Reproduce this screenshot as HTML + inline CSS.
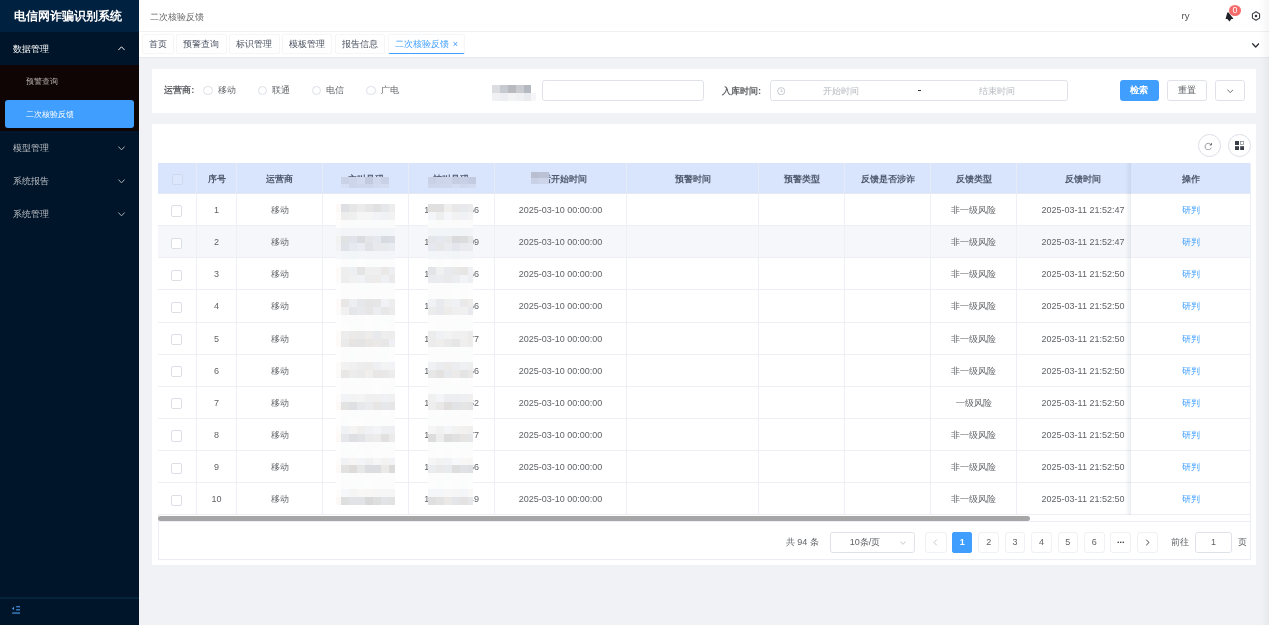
<!DOCTYPE html>
<html lang="zh"><head><meta charset="utf-8"><title>二次核验反馈</title>
<style>
*{box-sizing:border-box;margin:0;padding:0}
html,body{width:1269px;height:625px;overflow:hidden;background:#f0f2f5}
body{font-family:"Liberation Sans",sans-serif;font-size:9.33px;color:#606266;position:relative;will-change:transform}
.a{position:absolute;white-space:nowrap}
.c{position:absolute;white-space:nowrap;text-align:center;overflow:hidden}
#side{left:0;top:0;width:139px;height:625px;background:#001529}
#logo{left:0;top:0;width:139px;height:32px;background:#002140;color:#fff;font-weight:bold;font-size:11.9px;line-height:33px;text-align:center;padding-right:3.4px}
.mi{left:13.3px;font-size:9.33px;color:#b7bcc2;line-height:12px}
.sub{left:0;top:65px;width:139px;height:66px;background:#100505}
.act{left:5px;top:100px;width:129px;height:28px;border-radius:3px;background:#409eff}
.si{left:26px;font-size:8px;line-height:10px}
#hdr{left:139px;top:0;width:1130px;height:32px;background:#fff;border-bottom:1px solid #eef0f3}
#tabs{left:139px;top:32px;width:1130px;height:25px;background:#fff;box-shadow:0 0.7px 1.5px rgba(0,21,41,.10)}
.tab{top:34.4px;height:19.3px;line-height:18.6px;border:1px solid #f5f6f8;border-radius:2px;font-size:9.33px;color:#495060;text-align:center;overflow:hidden;background:#fff}
.panel{background:#fff}
.lbl{font-weight:bold;color:#606266;font-size:9.33px;line-height:12px}
.radio{width:9.33px;height:9.33px;border:1px solid #dcdfe6;border-radius:50%;background:#fff}
.inp{border:1px solid #dfe2e8;border-radius:2.67px;background:#fff}
.ph{color:#b4b8bf;font-size:9.33px;line-height:12px}
.btn{border:1px solid #dfe2e8;border-radius:2.67px;background:#fff;text-align:center;font-size:9.33px;line-height:19.3px;color:#606266;overflow:hidden}
.circ{width:22.7px;height:22.7px;border:1px solid #dcdfe6;border-radius:50%;background:#fff}
.th{background:#d8e5fc;top:163.3px;height:30.7px;line-height:32.6px;font-weight:bold;color:#515a6e;font-size:9.33px;border-right:1px solid #e6ebf5;border-bottom:1px solid #e3e8f2}
.td{font-size:9px;color:#606266;border-right:1px solid #eef0f5;border-bottom:1px solid #edeff4}
.cb{width:11.2px;height:11.2px;border:1px solid #dcdfe6;border-radius:2px;background:#fff}
.pg{top:531.8px;height:20.8px;line-height:19.6px;border:1px solid #f0f1f4;border-radius:3px;text-align:center;font-size:9px;color:#606266;background:#fff;overflow:hidden}
.mz{position:absolute;overflow:hidden}
</style></head>
<body>
<div id="side" class="a">
<div id="logo" class="a">电信网诈骗识别系统</div>
<div class="a mi" style="top:42.5px;color:#fff">数据管理</div>
<svg class="a" style="left:118.00px;top:45.98px" width="7" height="4.85" viewBox="0 0 7 4.85"><path d="M0.6 3.85 L3.50 0.8 L6.40 3.85" fill="none" stroke="#fff" stroke-width="0.95" stroke-linecap="round" stroke-linejoin="round"/></svg>
<div class="a sub"></div>
<div class="a si" style="top:77.0px;color:#b9b4b4">预警查询</div>
<div class="a act"></div>
<div class="a si" style="top:110.0px;color:#fff">二次核验反馈</div>
<div class="a mi" style="top:142px">模型管理</div>
<svg class="a" style="left:118.00px;top:145.67px" width="7" height="4.85" viewBox="0 0 7 4.85"><path d="M0.6 0.8 L3.50 3.85 L6.40 0.8" fill="none" stroke="#b7bcc2" stroke-width="0.95" stroke-linecap="round" stroke-linejoin="round"/></svg>
<div class="a mi" style="top:175px">系统报告</div>
<svg class="a" style="left:118.00px;top:178.67px" width="7" height="4.85" viewBox="0 0 7 4.85"><path d="M0.6 0.8 L3.50 3.85 L6.40 0.8" fill="none" stroke="#b7bcc2" stroke-width="0.95" stroke-linecap="round" stroke-linejoin="round"/></svg>
<div class="a mi" style="top:208px">系统管理</div>
<svg class="a" style="left:118.00px;top:211.67px" width="7" height="4.85" viewBox="0 0 7 4.85"><path d="M0.6 0.8 L3.50 3.85 L6.40 0.8" fill="none" stroke="#b7bcc2" stroke-width="0.95" stroke-linecap="round" stroke-linejoin="round"/></svg>
<div class="a" style="left:0;top:596.6px;width:139px;height:2px;background:linear-gradient(180deg,rgba(14,52,88,0),rgba(14,52,88,.9) 50%,rgba(14,52,88,0))"></div>
<svg class="a" style="left:11.8px;top:606.4px" width="8.4" height="8" viewBox="0 0 8.4 8"><path d="M0 2.4 L2 0.7 L2 4.1 Z" fill="#4a9cf0"/><rect x="4.2" y="0.2" width="4" height="1.1" fill="#4a9cf0"/><rect x="4.2" y="3.3" width="4" height="1.1" fill="#4a9cf0"/><rect x="0.1" y="6.5" width="8.1" height="1.1" fill="#4a9cf0"/></svg>
</div>
<div id="hdr" class="a"></div>
<div class="a" style="left:149.5px;top:10.5px;font-size:9.33px;line-height:12px;color:#666">二次核验反馈</div>
<div class="a" style="left:1181.6px;top:10.2px;font-size:9.6px;line-height:12px;color:#555">ry</div>
<svg class="a" style="left:1225px;top:11.5px" width="9" height="10" viewBox="0 0 9 10"><path d="M2.3 0.6 L3.6 0.5 L8.2 6.6 L8.2 7 L0.6 7 L0.7 6.4 Z" fill="#1f2329"/><path d="M2.4 7 L6.4 7 L4.4 9.6 Z" fill="#1f2329"/></svg>
<div class="a" style="left:1228.7px;top:5px;width:12.6px;height:10.8px;border-radius:50%;background:#f56c6c;color:#fff;font-size:8.7px;line-height:10.9px;text-align:center">0</div>
<svg class="a" style="left:1250.8px;top:10.7px" width="10" height="10" viewBox="0 0 10 10"><path d="M5 0.8 L8.6 2.9 L8.6 7.1 L5 9.2 L1.4 7.1 L1.4 2.9 Z" fill="none" stroke="#33373d" stroke-width="1.05" stroke-linejoin="round"/><circle cx="5" cy="5" r="1.25" fill="#33373d"/></svg>
<div id="tabs" class="a"></div>
<div class="a tab" style="left:141.6px;width:32.3px">首页</div>
<div class="a tab" style="left:176.3px;width:50.4px">预警查询</div>
<div class="a tab" style="left:229.2px;width:50.5px">标识管理</div>
<div class="a tab" style="left:281.9px;width:50.6px">模板管理</div>
<div class="a tab" style="left:335.0px;width:50.4px">报告信息</div>
<div class="a tab" style="left:387.8px;width:77px;color:#409eff;border-bottom:1.9px solid #409eff;text-align:left;padding-left:6.4px">二次核验反馈<span style="position:absolute;left:64px;top:0;font-size:9px">×</span></div>
<svg class="a" style="left:1252.00px;top:42.87px" width="7.4" height="5.07" viewBox="0 0 7.4 5.07"><path d="M0.6 0.8 L3.70 4.07 L6.80 0.8" fill="none" stroke="#2b2f36" stroke-width="1.3" stroke-linecap="round" stroke-linejoin="round"/></svg>
<div class="a panel" style="left:151.7px;top:69.3px;width:1104.3px;height:43.7px"></div>
<div class="a lbl" style="left:164.3px;top:84.4px">运营商:</div>
<div class="a radio" style="left:203.33px;top:85.93px"></div>
<div class="a" style="left:217.70px;top:84.4px;line-height:12px">移动</div>
<div class="a radio" style="left:257.63px;top:85.93px"></div>
<div class="a" style="left:272.00px;top:84.4px;line-height:12px">联通</div>
<div class="a radio" style="left:311.93px;top:85.93px"></div>
<div class="a" style="left:326.30px;top:84.4px;line-height:12px">电信</div>
<div class="a radio" style="left:366.23px;top:85.93px"></div>
<div class="a" style="left:380.60px;top:84.4px;line-height:12px">广电</div>
<div class="mz" style="left:492px;top:84.5px;width:44px;height:16px"><div class="a" style="left:0;top:0;width:39px;height:8px;background:linear-gradient(90deg,#dcdde1 0 8px,#c6c9cf 8px 16px,#b9babf 16px 24px,#c9cbd0 24px 32px,#b4b8c0 32px 39px)"></div><div class="a" style="left:0;top:8px;width:44px;height:8px;background:linear-gradient(90deg,#f1f1f4 0 8px,#eceef1 8px 16px,#f3f3f3 16px 24px,#eef0f2 24px 32px,#e9ebee 32px 39px,#f6f6f8 39px 44px)"></div></div>
<div class="a inp" style="left:542.4px;top:80.2px;width:161.3px;height:20.7px"></div>
<div class="a lbl" style="left:722px;top:84.6px">入库时间:</div>
<div class="a inp" style="left:770.1px;top:80.2px;width:297.5px;height:20.7px"></div>
<svg class="a" style="left:777px;top:86.6px" width="8.4" height="8.4" viewBox="0 0 8.4 8.4"><circle cx="4.2" cy="4.2" r="3.6" fill="none" stroke="#b9bdc6" stroke-width="0.8"/><path d="M4.2 2.2 V4.4 H5.9" fill="none" stroke="#b9bdc6" stroke-width="0.8"/></svg>
<div class="c ph" style="left:811.4px;top:84.6px;width:60px">开始时间</div>
<div class="a" style="left:918.2px;top:90.2px;width:2.6px;height:1.3px;background:#303133"></div>
<div class="c ph" style="left:966.7px;top:84.6px;width:60px">结束时间</div>
<div class="a btn" style="left:1119.7px;top:79.9px;width:39.3px;height:21.1px;background:#409eff;border-color:#409eff;color:#fff;font-weight:bold">检索</div>
<div class="a btn" style="left:1167.3px;top:79.9px;width:39.6px;height:21.1px">重置</div>
<div class="a btn" style="left:1215px;top:79.9px;width:29.9px;height:21.1px"></div>
<svg class="a" style="left:1226.70px;top:88.58px" width="6.6" height="4.63" viewBox="0 0 6.6 4.63"><path d="M0.6 0.8 L3.30 3.63 L6.00 0.8" fill="none" stroke="#606266" stroke-width="0.9" stroke-linecap="round" stroke-linejoin="round"/></svg>
<div class="a panel" style="left:151.7px;top:123.8px;width:1104.3px;height:441.4px"></div>
<div class="a circ" style="left:1198.1px;top:134px"></div>
<svg class="a" style="left:1204.1px;top:141.7px" width="8.6" height="8.6" viewBox="0 0 9 9"><path d="M7.3 2.9 A3.4 3.4 0 1 0 7.7 5.9" fill="none" stroke="#80838a" stroke-width="0.85"/><path d="M7.9 1.2 V3.1 H6" fill="none" stroke="#4d5057" stroke-width="0.9"/></svg>
<div class="a circ" style="left:1228.1px;top:134px"></div>
<svg class="a" style="left:1234.5px;top:141.2px" width="9.2" height="9.2" viewBox="0 0 9.2 9.2"><rect x="0" y="0" width="4" height="4" fill="#3a3f47"/><rect x="5.4" y="0.4" width="3.2" height="3.2" fill="#fff" stroke="#8a8f98" stroke-width="0.8"/><rect x="0" y="5.2" width="4" height="4" fill="#3a3f47"/><rect x="5.2" y="5.2" width="4" height="4" fill="#3a3f47"/></svg>
<div class="a" style="left:158px;top:163.3px;width:1092.5px;height:396.6px;border:1px solid #ebeef5"></div>
<div class="c th" style="left:158px;width:39.0px"></div>
<div class="c th" style="left:197.0px;width:40.0px">序号</div>
<div class="c th" style="left:237.0px;width:86.2px">运营商</div>
<div class="c th" style="left:323.2px;width:85.9px">主叫号码</div>
<div class="c th" style="left:409.1px;width:85.8px">被叫号码</div>
<div class="c th" style="left:494.9px;width:132.2px">通话开始时间</div>
<div class="c th" style="left:627.1px;width:132.0px">预警时间</div>
<div class="c th" style="left:759.1px;width:86.0px">预警类型</div>
<div class="c th" style="left:845.1px;width:86.1px">反馈是否涉诈</div>
<div class="c th" style="left:931.2px;width:85.7px">反馈类型</div>
<div class="c th" style="left:1016.9px;width:133.3px">反馈时间</div>
<div class="a cb" style="left:171.67px;top:173.60px;border-color:#cfd9ee;background:#dde7fb"></div>
<div class="mz" style="left:340.9px;top:176.6px;width:48.10px;height:11px"><div class="a" style="left:0;top:0;width:100%;height:8px;background:linear-gradient(90deg,rgb(201,210,231) 0.00px 7.90px,rgb(204,213,234) 7.90px 16.10px,rgb(209,218,239) 16.10px 23.80px,rgb(193,202,223) 23.80px 32.20px,rgb(207,216,237) 32.20px 39.70px,rgb(200,209,230) 39.70px 48.10px)"></div><div class="a" style="left:0;top:7.9px;width:100%;height:3.1px;background:linear-gradient(90deg,rgb(214,223,244) 0.00px 7.90px,rgb(204,213,234) 7.90px 16.10px,rgb(206,215,236) 16.10px 23.80px,rgb(205,214,235) 23.80px 32.20px,rgb(209,218,239) 32.20px 39.70px,rgb(211,220,241) 39.70px 48.10px)"></div></div>
<div class="mz" style="left:428.3px;top:176.6px;width:47.90px;height:11px"><div class="a" style="left:0;top:0;width:100%;height:8px;background:linear-gradient(90deg,rgb(200,209,230) 0.00px 8.00px,rgb(204,213,234) 8.00px 15.90px,rgb(205,214,235) 15.90px 23.90px,rgb(197,206,227) 23.90px 31.90px,rgb(199,208,229) 31.90px 39.90px,rgb(194,203,224) 39.90px 47.90px)"></div><div class="a" style="left:0;top:7.9px;width:100%;height:3.1px;background:linear-gradient(90deg,rgb(205,214,235) 0.00px 8.00px,rgb(206,215,236) 8.00px 15.90px,rgb(207,216,237) 15.90px 23.90px,rgb(212,221,242) 23.90px 31.90px,rgb(207,216,237) 31.90px 39.90px,rgb(210,219,240) 39.90px 47.90px)"></div></div>
<div class="mz" style="left:531.4px;top:172.1px;width:17.2px;height:11.8px;background:linear-gradient(180deg,rgba(0,0,0,0) 0 5.9px,rgba(0,0,0,0) 5.9px),linear-gradient(90deg,#b9bed0 0 8px,#bcc2d5 8px 17.2px)"><div class="a" style="left:0;top:5.9px;width:100%;height:5.9px;background:linear-gradient(90deg,#c9d1e6 0 8px,#cdd5ea 8px 17.2px)"></div></div>
<div class="c td" style="left:158px;top:194.00px;width:39.0px;height:32.15px;line-height:33.85px;background:#fff"></div>
<div class="c td" style="left:197.0px;top:194.00px;width:40.0px;height:32.15px;line-height:33.85px;background:#fff">1</div>
<div class="c td" style="left:237.0px;top:194.00px;width:86.2px;height:32.15px;line-height:33.85px;background:#fff">移动</div>
<div class="c td" style="left:323.2px;top:194.00px;width:85.9px;height:32.15px;line-height:33.85px;background:#fff"></div>
<div class="c td" style="left:409.1px;top:194.00px;width:85.8px;height:32.15px;line-height:33.85px;background:#fff"></div>
<div class="c td" style="left:494.9px;top:194.00px;width:132.2px;height:32.15px;line-height:33.85px;background:#fff">2025-03-10 00:00:00</div>
<div class="c td" style="left:627.1px;top:194.00px;width:132.0px;height:32.15px;line-height:33.85px;background:#fff"></div>
<div class="c td" style="left:759.1px;top:194.00px;width:86.0px;height:32.15px;line-height:33.85px;background:#fff"></div>
<div class="c td" style="left:845.1px;top:194.00px;width:86.1px;height:32.15px;line-height:33.85px;background:#fff"></div>
<div class="c td" style="left:931.2px;top:194.00px;width:85.7px;height:32.15px;line-height:33.85px;background:#fff">非一级风险</div>
<div class="c td" style="left:1016.9px;top:194.00px;width:133.3px;height:32.15px;line-height:33.85px;background:#fff">2025-03-11 21:52:47</div>
<div class="a cb" style="left:171.30px;top:205.40px"></div>
<div class="a" style="left:424.3px;top:194.00px;line-height:33.85px;font-size:9px">1</div>
<div class="a" style="left:468.9px;top:194.00px;line-height:33.85px;font-size:9px">66</div>
<div class="c td" style="left:158px;top:226.15px;width:39.0px;height:32.15px;line-height:33.85px;background:#f5f7fa"></div>
<div class="c td" style="left:197.0px;top:226.15px;width:40.0px;height:32.15px;line-height:33.85px;background:#f5f7fa">2</div>
<div class="c td" style="left:237.0px;top:226.15px;width:86.2px;height:32.15px;line-height:33.85px;background:#f5f7fa">移动</div>
<div class="c td" style="left:323.2px;top:226.15px;width:85.9px;height:32.15px;line-height:33.85px;background:#f5f7fa"></div>
<div class="c td" style="left:409.1px;top:226.15px;width:85.8px;height:32.15px;line-height:33.85px;background:#f5f7fa"></div>
<div class="c td" style="left:494.9px;top:226.15px;width:132.2px;height:32.15px;line-height:33.85px;background:#f5f7fa">2025-03-10 00:00:00</div>
<div class="c td" style="left:627.1px;top:226.15px;width:132.0px;height:32.15px;line-height:33.85px;background:#f5f7fa"></div>
<div class="c td" style="left:759.1px;top:226.15px;width:86.0px;height:32.15px;line-height:33.85px;background:#f5f7fa"></div>
<div class="c td" style="left:845.1px;top:226.15px;width:86.1px;height:32.15px;line-height:33.85px;background:#f5f7fa"></div>
<div class="c td" style="left:931.2px;top:226.15px;width:85.7px;height:32.15px;line-height:33.85px;background:#f5f7fa">非一级风险</div>
<div class="c td" style="left:1016.9px;top:226.15px;width:133.3px;height:32.15px;line-height:33.85px;background:#f5f7fa">2025-03-11 21:52:47</div>
<div class="a cb" style="left:171.30px;top:237.55px"></div>
<div class="a" style="left:424.3px;top:226.15px;line-height:33.85px;font-size:9px">1</div>
<div class="a" style="left:468.9px;top:226.15px;line-height:33.85px;font-size:9px">09</div>
<div class="c td" style="left:158px;top:258.30px;width:39.0px;height:32.15px;line-height:33.85px;background:#fff"></div>
<div class="c td" style="left:197.0px;top:258.30px;width:40.0px;height:32.15px;line-height:33.85px;background:#fff">3</div>
<div class="c td" style="left:237.0px;top:258.30px;width:86.2px;height:32.15px;line-height:33.85px;background:#fff">移动</div>
<div class="c td" style="left:323.2px;top:258.30px;width:85.9px;height:32.15px;line-height:33.85px;background:#fff"></div>
<div class="c td" style="left:409.1px;top:258.30px;width:85.8px;height:32.15px;line-height:33.85px;background:#fff"></div>
<div class="c td" style="left:494.9px;top:258.30px;width:132.2px;height:32.15px;line-height:33.85px;background:#fff">2025-03-10 00:00:00</div>
<div class="c td" style="left:627.1px;top:258.30px;width:132.0px;height:32.15px;line-height:33.85px;background:#fff"></div>
<div class="c td" style="left:759.1px;top:258.30px;width:86.0px;height:32.15px;line-height:33.85px;background:#fff"></div>
<div class="c td" style="left:845.1px;top:258.30px;width:86.1px;height:32.15px;line-height:33.85px;background:#fff"></div>
<div class="c td" style="left:931.2px;top:258.30px;width:85.7px;height:32.15px;line-height:33.85px;background:#fff">非一级风险</div>
<div class="c td" style="left:1016.9px;top:258.30px;width:133.3px;height:32.15px;line-height:33.85px;background:#fff">2025-03-11 21:52:50</div>
<div class="a cb" style="left:171.30px;top:269.70px"></div>
<div class="a" style="left:424.3px;top:258.30px;line-height:33.85px;font-size:9px">1</div>
<div class="a" style="left:468.9px;top:258.30px;line-height:33.85px;font-size:9px">66</div>
<div class="c td" style="left:158px;top:290.45px;width:39.0px;height:32.15px;line-height:33.85px;background:#fff"></div>
<div class="c td" style="left:197.0px;top:290.45px;width:40.0px;height:32.15px;line-height:33.85px;background:#fff">4</div>
<div class="c td" style="left:237.0px;top:290.45px;width:86.2px;height:32.15px;line-height:33.85px;background:#fff">移动</div>
<div class="c td" style="left:323.2px;top:290.45px;width:85.9px;height:32.15px;line-height:33.85px;background:#fff"></div>
<div class="c td" style="left:409.1px;top:290.45px;width:85.8px;height:32.15px;line-height:33.85px;background:#fff"></div>
<div class="c td" style="left:494.9px;top:290.45px;width:132.2px;height:32.15px;line-height:33.85px;background:#fff">2025-03-10 00:00:00</div>
<div class="c td" style="left:627.1px;top:290.45px;width:132.0px;height:32.15px;line-height:33.85px;background:#fff"></div>
<div class="c td" style="left:759.1px;top:290.45px;width:86.0px;height:32.15px;line-height:33.85px;background:#fff"></div>
<div class="c td" style="left:845.1px;top:290.45px;width:86.1px;height:32.15px;line-height:33.85px;background:#fff"></div>
<div class="c td" style="left:931.2px;top:290.45px;width:85.7px;height:32.15px;line-height:33.85px;background:#fff">非一级风险</div>
<div class="c td" style="left:1016.9px;top:290.45px;width:133.3px;height:32.15px;line-height:33.85px;background:#fff">2025-03-11 21:52:50</div>
<div class="a cb" style="left:171.30px;top:301.85px"></div>
<div class="a" style="left:424.3px;top:290.45px;line-height:33.85px;font-size:9px">1</div>
<div class="a" style="left:468.9px;top:290.45px;line-height:33.85px;font-size:9px">66</div>
<div class="c td" style="left:158px;top:322.60px;width:39.0px;height:32.15px;line-height:33.85px;background:#fff"></div>
<div class="c td" style="left:197.0px;top:322.60px;width:40.0px;height:32.15px;line-height:33.85px;background:#fff">5</div>
<div class="c td" style="left:237.0px;top:322.60px;width:86.2px;height:32.15px;line-height:33.85px;background:#fff">移动</div>
<div class="c td" style="left:323.2px;top:322.60px;width:85.9px;height:32.15px;line-height:33.85px;background:#fff"></div>
<div class="c td" style="left:409.1px;top:322.60px;width:85.8px;height:32.15px;line-height:33.85px;background:#fff"></div>
<div class="c td" style="left:494.9px;top:322.60px;width:132.2px;height:32.15px;line-height:33.85px;background:#fff">2025-03-10 00:00:00</div>
<div class="c td" style="left:627.1px;top:322.60px;width:132.0px;height:32.15px;line-height:33.85px;background:#fff"></div>
<div class="c td" style="left:759.1px;top:322.60px;width:86.0px;height:32.15px;line-height:33.85px;background:#fff"></div>
<div class="c td" style="left:845.1px;top:322.60px;width:86.1px;height:32.15px;line-height:33.85px;background:#fff"></div>
<div class="c td" style="left:931.2px;top:322.60px;width:85.7px;height:32.15px;line-height:33.85px;background:#fff">非一级风险</div>
<div class="c td" style="left:1016.9px;top:322.60px;width:133.3px;height:32.15px;line-height:33.85px;background:#fff">2025-03-11 21:52:50</div>
<div class="a cb" style="left:171.30px;top:334.00px"></div>
<div class="a" style="left:424.3px;top:322.60px;line-height:33.85px;font-size:9px">1</div>
<div class="a" style="left:468.9px;top:322.60px;line-height:33.85px;font-size:9px">77</div>
<div class="c td" style="left:158px;top:354.75px;width:39.0px;height:32.15px;line-height:33.85px;background:#fff"></div>
<div class="c td" style="left:197.0px;top:354.75px;width:40.0px;height:32.15px;line-height:33.85px;background:#fff">6</div>
<div class="c td" style="left:237.0px;top:354.75px;width:86.2px;height:32.15px;line-height:33.85px;background:#fff">移动</div>
<div class="c td" style="left:323.2px;top:354.75px;width:85.9px;height:32.15px;line-height:33.85px;background:#fff"></div>
<div class="c td" style="left:409.1px;top:354.75px;width:85.8px;height:32.15px;line-height:33.85px;background:#fff"></div>
<div class="c td" style="left:494.9px;top:354.75px;width:132.2px;height:32.15px;line-height:33.85px;background:#fff">2025-03-10 00:00:00</div>
<div class="c td" style="left:627.1px;top:354.75px;width:132.0px;height:32.15px;line-height:33.85px;background:#fff"></div>
<div class="c td" style="left:759.1px;top:354.75px;width:86.0px;height:32.15px;line-height:33.85px;background:#fff"></div>
<div class="c td" style="left:845.1px;top:354.75px;width:86.1px;height:32.15px;line-height:33.85px;background:#fff"></div>
<div class="c td" style="left:931.2px;top:354.75px;width:85.7px;height:32.15px;line-height:33.85px;background:#fff">非一级风险</div>
<div class="c td" style="left:1016.9px;top:354.75px;width:133.3px;height:32.15px;line-height:33.85px;background:#fff">2025-03-11 21:52:50</div>
<div class="a cb" style="left:171.30px;top:366.15px"></div>
<div class="a" style="left:424.3px;top:354.75px;line-height:33.85px;font-size:9px">1</div>
<div class="a" style="left:468.9px;top:354.75px;line-height:33.85px;font-size:9px">66</div>
<div class="c td" style="left:158px;top:386.90px;width:39.0px;height:32.15px;line-height:33.85px;background:#fff"></div>
<div class="c td" style="left:197.0px;top:386.90px;width:40.0px;height:32.15px;line-height:33.85px;background:#fff">7</div>
<div class="c td" style="left:237.0px;top:386.90px;width:86.2px;height:32.15px;line-height:33.85px;background:#fff">移动</div>
<div class="c td" style="left:323.2px;top:386.90px;width:85.9px;height:32.15px;line-height:33.85px;background:#fff"></div>
<div class="c td" style="left:409.1px;top:386.90px;width:85.8px;height:32.15px;line-height:33.85px;background:#fff"></div>
<div class="c td" style="left:494.9px;top:386.90px;width:132.2px;height:32.15px;line-height:33.85px;background:#fff">2025-03-10 00:00:00</div>
<div class="c td" style="left:627.1px;top:386.90px;width:132.0px;height:32.15px;line-height:33.85px;background:#fff"></div>
<div class="c td" style="left:759.1px;top:386.90px;width:86.0px;height:32.15px;line-height:33.85px;background:#fff"></div>
<div class="c td" style="left:845.1px;top:386.90px;width:86.1px;height:32.15px;line-height:33.85px;background:#fff"></div>
<div class="c td" style="left:931.2px;top:386.90px;width:85.7px;height:32.15px;line-height:33.85px;background:#fff">一级风险</div>
<div class="c td" style="left:1016.9px;top:386.90px;width:133.3px;height:32.15px;line-height:33.85px;background:#fff">2025-03-11 21:52:50</div>
<div class="a cb" style="left:171.30px;top:398.30px"></div>
<div class="a" style="left:424.3px;top:386.90px;line-height:33.85px;font-size:9px">1</div>
<div class="a" style="left:468.9px;top:386.90px;line-height:33.85px;font-size:9px">52</div>
<div class="c td" style="left:158px;top:419.05px;width:39.0px;height:32.15px;line-height:33.85px;background:#fff"></div>
<div class="c td" style="left:197.0px;top:419.05px;width:40.0px;height:32.15px;line-height:33.85px;background:#fff">8</div>
<div class="c td" style="left:237.0px;top:419.05px;width:86.2px;height:32.15px;line-height:33.85px;background:#fff">移动</div>
<div class="c td" style="left:323.2px;top:419.05px;width:85.9px;height:32.15px;line-height:33.85px;background:#fff"></div>
<div class="c td" style="left:409.1px;top:419.05px;width:85.8px;height:32.15px;line-height:33.85px;background:#fff"></div>
<div class="c td" style="left:494.9px;top:419.05px;width:132.2px;height:32.15px;line-height:33.85px;background:#fff">2025-03-10 00:00:00</div>
<div class="c td" style="left:627.1px;top:419.05px;width:132.0px;height:32.15px;line-height:33.85px;background:#fff"></div>
<div class="c td" style="left:759.1px;top:419.05px;width:86.0px;height:32.15px;line-height:33.85px;background:#fff"></div>
<div class="c td" style="left:845.1px;top:419.05px;width:86.1px;height:32.15px;line-height:33.85px;background:#fff"></div>
<div class="c td" style="left:931.2px;top:419.05px;width:85.7px;height:32.15px;line-height:33.85px;background:#fff">非一级风险</div>
<div class="c td" style="left:1016.9px;top:419.05px;width:133.3px;height:32.15px;line-height:33.85px;background:#fff">2025-03-11 21:52:50</div>
<div class="a cb" style="left:171.30px;top:430.45px"></div>
<div class="a" style="left:424.3px;top:419.05px;line-height:33.85px;font-size:9px">1</div>
<div class="a" style="left:468.9px;top:419.05px;line-height:33.85px;font-size:9px">77</div>
<div class="c td" style="left:158px;top:451.20px;width:39.0px;height:32.15px;line-height:33.85px;background:#fff"></div>
<div class="c td" style="left:197.0px;top:451.20px;width:40.0px;height:32.15px;line-height:33.85px;background:#fff">9</div>
<div class="c td" style="left:237.0px;top:451.20px;width:86.2px;height:32.15px;line-height:33.85px;background:#fff">移动</div>
<div class="c td" style="left:323.2px;top:451.20px;width:85.9px;height:32.15px;line-height:33.85px;background:#fff"></div>
<div class="c td" style="left:409.1px;top:451.20px;width:85.8px;height:32.15px;line-height:33.85px;background:#fff"></div>
<div class="c td" style="left:494.9px;top:451.20px;width:132.2px;height:32.15px;line-height:33.85px;background:#fff">2025-03-10 00:00:00</div>
<div class="c td" style="left:627.1px;top:451.20px;width:132.0px;height:32.15px;line-height:33.85px;background:#fff"></div>
<div class="c td" style="left:759.1px;top:451.20px;width:86.0px;height:32.15px;line-height:33.85px;background:#fff"></div>
<div class="c td" style="left:845.1px;top:451.20px;width:86.1px;height:32.15px;line-height:33.85px;background:#fff"></div>
<div class="c td" style="left:931.2px;top:451.20px;width:85.7px;height:32.15px;line-height:33.85px;background:#fff">非一级风险</div>
<div class="c td" style="left:1016.9px;top:451.20px;width:133.3px;height:32.15px;line-height:33.85px;background:#fff">2025-03-11 21:52:50</div>
<div class="a cb" style="left:171.30px;top:462.60px"></div>
<div class="a" style="left:424.3px;top:451.20px;line-height:33.85px;font-size:9px">1</div>
<div class="a" style="left:468.9px;top:451.20px;line-height:33.85px;font-size:9px">66</div>
<div class="c td" style="left:158px;top:483.35px;width:39.0px;height:32.15px;line-height:33.85px;background:#fff"></div>
<div class="c td" style="left:197.0px;top:483.35px;width:40.0px;height:32.15px;line-height:33.85px;background:#fff">10</div>
<div class="c td" style="left:237.0px;top:483.35px;width:86.2px;height:32.15px;line-height:33.85px;background:#fff">移动</div>
<div class="c td" style="left:323.2px;top:483.35px;width:85.9px;height:32.15px;line-height:33.85px;background:#fff"></div>
<div class="c td" style="left:409.1px;top:483.35px;width:85.8px;height:32.15px;line-height:33.85px;background:#fff"></div>
<div class="c td" style="left:494.9px;top:483.35px;width:132.2px;height:32.15px;line-height:33.85px;background:#fff">2025-03-10 00:00:00</div>
<div class="c td" style="left:627.1px;top:483.35px;width:132.0px;height:32.15px;line-height:33.85px;background:#fff"></div>
<div class="c td" style="left:759.1px;top:483.35px;width:86.0px;height:32.15px;line-height:33.85px;background:#fff"></div>
<div class="c td" style="left:845.1px;top:483.35px;width:86.1px;height:32.15px;line-height:33.85px;background:#fff"></div>
<div class="c td" style="left:931.2px;top:483.35px;width:85.7px;height:32.15px;line-height:33.85px;background:#fff">非一级风险</div>
<div class="c td" style="left:1016.9px;top:483.35px;width:133.3px;height:32.15px;line-height:33.85px;background:#fff">2025-03-11 21:52:50</div>
<div class="a cb" style="left:171.30px;top:494.75px"></div>
<div class="a" style="left:424.3px;top:483.35px;line-height:33.85px;font-size:9px">1</div>
<div class="a" style="left:468.9px;top:483.35px;line-height:33.85px;font-size:9px">49</div>
<div class="mz" style="left:336.1px;top:203.8px;width:58.50px;height:301.34px"><div class="a" style="left:0;top:0.00px;width:100%;height:8.23px;background:linear-gradient(90deg,rgb(252,249,247) 0.00px 4.70px,rgb(223,224,227) 4.70px 12.90px,rgb(230,230,230) 12.90px 20.80px,rgb(235,235,235) 20.80px 29.00px,rgb(230,230,230) 29.00px 36.80px,rgb(225,225,226) 36.80px 44.80px,rgb(230,231,234) 44.80px 52.80px,rgb(237,237,238) 52.80px 58.50px)"></div><div class="a" style="left:0;top:7.93px;width:100%;height:8.23px;background:linear-gradient(90deg,rgb(253,252,250) 0.00px 4.70px,rgb(237,237,237) 4.70px 12.90px,rgb(239,239,239) 12.90px 20.80px,rgb(245,245,245) 20.80px 29.00px,rgb(245,245,246) 29.00px 36.80px,rgb(242,243,246) 36.80px 44.80px,rgb(240,241,244) 44.80px 52.80px,rgb(242,242,242) 52.80px 58.50px)"></div><div class="a" style="left:0;top:15.86px;width:100%;height:8.23px;background:linear-gradient(90deg,rgb(253,253,253) 0.00px 4.70px,rgb(251,251,251) 4.70px 12.90px,rgb(250,251,251) 12.90px 20.80px,rgb(251,251,251) 20.80px 29.00px,rgb(250,251,251) 29.00px 36.80px,rgb(250,251,251) 36.80px 44.80px,rgb(251,251,251) 44.80px 52.80px,rgb(250,251,251) 52.80px 58.50px)"></div><div class="a" style="left:0;top:23.79px;width:100%;height:8.23px;background:linear-gradient(90deg,rgb(244,246,248) 0.00px 4.70px,rgb(242,244,247) 4.70px 12.90px,rgb(243,244,247) 12.90px 20.80px,rgb(242,244,247) 20.80px 29.00px,rgb(242,244,247) 29.00px 36.80px,rgb(242,244,247) 36.80px 44.80px,rgb(242,245,247) 44.80px 52.80px,rgb(242,244,247) 52.80px 58.50px)"></div><div class="a" style="left:0;top:31.72px;width:100%;height:8.23px;background:linear-gradient(90deg,rgb(242,242,242) 0.00px 4.70px,rgb(225,226,227) 4.70px 12.90px,rgb(224,227,233) 12.90px 20.80px,rgb(217,219,223) 20.80px 29.00px,rgb(227,229,233) 29.00px 36.80px,rgb(229,232,238) 36.80px 44.80px,rgb(216,219,225) 44.80px 52.80px,rgb(218,221,227) 52.80px 58.50px)"></div><div class="a" style="left:0;top:39.65px;width:100%;height:8.23px;background:linear-gradient(90deg,rgb(243,243,245) 0.00px 4.70px,rgb(223,226,232) 4.70px 12.90px,rgb(230,233,239) 12.90px 20.80px,rgb(233,236,242) 20.80px 29.00px,rgb(224,226,230) 29.00px 36.80px,rgb(231,233,236) 36.80px 44.80px,rgb(231,233,237) 44.80px 52.80px,rgb(232,235,241) 52.80px 58.50px)"></div><div class="a" style="left:0;top:47.58px;width:100%;height:8.23px;background:linear-gradient(90deg,rgb(246,247,249) 0.00px 4.70px,rgb(243,245,248) 4.70px 12.90px,rgb(242,245,248) 12.90px 20.80px,rgb(244,245,248) 20.80px 29.00px,rgb(243,245,248) 29.00px 36.80px,rgb(244,245,248) 36.80px 44.80px,rgb(243,245,248) 44.80px 52.80px,rgb(243,245,248) 52.80px 58.50px)"></div><div class="a" style="left:0;top:55.51px;width:100%;height:8.23px;background:linear-gradient(90deg,rgb(254,254,254) 0.00px 4.70px,rgb(253,252,252) 4.70px 12.90px,rgb(251,252,252) 12.90px 20.80px,rgb(252,253,252) 20.80px 29.00px,rgb(251,252,252) 29.00px 36.80px,rgb(251,252,252) 36.80px 44.80px,rgb(253,252,252) 44.80px 52.80px,rgb(252,252,252) 52.80px 58.50px)"></div><div class="a" style="left:0;top:63.44px;width:100%;height:8.23px;background:linear-gradient(90deg,rgb(253,250,248) 0.00px 4.70px,rgb(238,238,238) 4.70px 12.90px,rgb(238,239,242) 12.90px 20.80px,rgb(228,228,228) 20.80px 29.00px,rgb(239,239,240) 29.00px 36.80px,rgb(239,239,240) 36.80px 44.80px,rgb(234,233,231) 44.80px 52.80px,rgb(237,238,241) 52.80px 58.50px)"></div><div class="a" style="left:0;top:71.37px;width:100%;height:8.23px;background:linear-gradient(90deg,rgb(253,251,249) 0.00px 4.70px,rgb(237,237,237) 4.70px 12.90px,rgb(241,241,242) 12.90px 20.80px,rgb(241,242,245) 20.80px 29.00px,rgb(236,236,236) 29.00px 36.80px,rgb(237,236,234) 36.80px 44.80px,rgb(239,240,243) 44.80px 52.80px,rgb(234,234,235) 52.80px 58.50px)"></div><div class="a" style="left:0;top:79.30px;width:100%;height:8.23px;background:linear-gradient(90deg,rgb(254,254,254) 0.00px 4.70px,rgb(252,252,252) 4.70px 12.90px,rgb(253,252,252) 12.90px 20.80px,rgb(251,252,252) 20.80px 29.00px,rgb(251,252,252) 29.00px 36.80px,rgb(253,252,252) 36.80px 44.80px,rgb(252,252,252) 44.80px 52.80px,rgb(251,252,252) 52.80px 58.50px)"></div><div class="a" style="left:0;top:87.23px;width:100%;height:8.23px;background:linear-gradient(90deg,rgb(254,254,254) 0.00px 4.70px,rgb(253,252,252) 4.70px 12.90px,rgb(252,252,252) 12.90px 20.80px,rgb(252,252,252) 20.80px 29.00px,rgb(253,252,252) 29.00px 36.80px,rgb(252,252,252) 36.80px 44.80px,rgb(252,252,252) 44.80px 52.80px,rgb(252,252,252) 52.80px 58.50px)"></div><div class="a" style="left:0;top:95.16px;width:100%;height:8.23px;background:linear-gradient(90deg,rgb(253,250,249) 0.00px 4.70px,rgb(232,231,229) 4.70px 12.90px,rgb(237,238,241) 12.90px 20.80px,rgb(230,231,234) 20.80px 29.00px,rgb(229,229,230) 29.00px 36.80px,rgb(230,230,230) 36.80px 44.80px,rgb(241,242,245) 44.80px 52.80px,rgb(237,237,238) 52.80px 58.50px)"></div><div class="a" style="left:0;top:103.09px;width:100%;height:8.23px;background:linear-gradient(90deg,rgb(253,251,249) 0.00px 4.70px,rgb(241,241,242) 4.70px 12.90px,rgb(229,230,233) 12.90px 20.80px,rgb(232,233,236) 20.80px 29.00px,rgb(230,230,230) 29.00px 36.80px,rgb(236,237,240) 36.80px 44.80px,rgb(231,231,232) 44.80px 52.80px,rgb(235,235,235) 52.80px 58.50px)"></div><div class="a" style="left:0;top:111.02px;width:100%;height:8.23px;background:linear-gradient(90deg,rgb(254,254,254) 0.00px 4.70px,rgb(252,252,252) 4.70px 12.90px,rgb(252,252,252) 12.90px 20.80px,rgb(252,252,252) 20.80px 29.00px,rgb(252,253,252) 29.00px 36.80px,rgb(252,252,252) 36.80px 44.80px,rgb(251,252,252) 44.80px 52.80px,rgb(251,252,252) 52.80px 58.50px)"></div><div class="a" style="left:0;top:118.95px;width:100%;height:8.23px;background:linear-gradient(90deg,rgb(254,254,254) 0.00px 4.70px,rgb(252,253,252) 4.70px 12.90px,rgb(251,252,252) 12.90px 20.80px,rgb(253,252,252) 20.80px 29.00px,rgb(252,253,252) 29.00px 36.80px,rgb(251,252,252) 36.80px 44.80px,rgb(252,253,252) 44.80px 52.80px,rgb(253,252,252) 52.80px 58.50px)"></div><div class="a" style="left:0;top:126.88px;width:100%;height:8.23px;background:linear-gradient(90deg,rgb(253,251,249) 0.00px 4.70px,rgb(237,237,238) 4.70px 12.90px,rgb(235,234,232) 12.90px 20.80px,rgb(233,233,234) 20.80px 29.00px,rgb(238,237,235) 29.00px 36.80px,rgb(232,233,236) 36.80px 44.80px,rgb(238,238,238) 44.80px 52.80px,rgb(238,237,235) 52.80px 58.50px)"></div><div class="a" style="left:0;top:134.81px;width:100%;height:8.23px;background:linear-gradient(90deg,rgb(253,250,248) 0.00px 4.70px,rgb(234,234,235) 4.70px 12.90px,rgb(230,229,227) 12.90px 20.80px,rgb(228,228,229) 20.80px 29.00px,rgb(232,231,229) 29.00px 36.80px,rgb(234,233,231) 36.80px 44.80px,rgb(231,231,231) 44.80px 52.80px,rgb(239,240,243) 52.80px 58.50px)"></div><div class="a" style="left:0;top:142.74px;width:100%;height:8.23px;background:linear-gradient(90deg,rgb(254,254,254) 0.00px 4.70px,rgb(253,252,252) 4.70px 12.90px,rgb(251,252,252) 12.90px 20.80px,rgb(252,252,252) 20.80px 29.00px,rgb(252,252,252) 29.00px 36.80px,rgb(253,252,252) 36.80px 44.80px,rgb(251,252,252) 44.80px 52.80px,rgb(252,253,252) 52.80px 58.50px)"></div><div class="a" style="left:0;top:150.67px;width:100%;height:8.23px;background:linear-gradient(90deg,rgb(254,254,254) 0.00px 4.70px,rgb(252,252,252) 4.70px 12.90px,rgb(251,252,252) 12.90px 20.80px,rgb(253,252,252) 20.80px 29.00px,rgb(252,252,252) 29.00px 36.80px,rgb(251,252,252) 36.80px 44.80px,rgb(251,252,252) 44.80px 52.80px,rgb(252,253,252) 52.80px 58.50px)"></div><div class="a" style="left:0;top:158.60px;width:100%;height:8.23px;background:linear-gradient(90deg,rgb(253,251,250) 0.00px 4.70px,rgb(242,242,243) 4.70px 12.90px,rgb(240,240,240) 12.90px 20.80px,rgb(237,237,237) 20.80px 29.00px,rgb(237,236,234) 29.00px 36.80px,rgb(238,239,242) 36.80px 44.80px,rgb(243,243,244) 44.80px 52.80px,rgb(242,243,246) 52.80px 58.50px)"></div><div class="a" style="left:0;top:166.53px;width:100%;height:8.23px;background:linear-gradient(90deg,rgb(252,250,248) 0.00px 4.70px,rgb(232,231,229) 4.70px 12.90px,rgb(236,236,237) 12.90px 20.80px,rgb(234,234,235) 20.80px 29.00px,rgb(240,239,237) 29.00px 36.80px,rgb(232,231,229) 36.80px 44.80px,rgb(232,232,233) 44.80px 52.80px,rgb(236,236,237) 52.80px 58.50px)"></div><div class="a" style="left:0;top:174.46px;width:100%;height:8.23px;background:linear-gradient(90deg,rgb(254,254,254) 0.00px 4.70px,rgb(253,252,252) 4.70px 12.90px,rgb(251,252,252) 12.90px 20.80px,rgb(252,252,252) 20.80px 29.00px,rgb(252,252,252) 29.00px 36.80px,rgb(252,253,252) 36.80px 44.80px,rgb(252,253,252) 44.80px 52.80px,rgb(252,252,252) 52.80px 58.50px)"></div><div class="a" style="left:0;top:182.39px;width:100%;height:8.23px;background:linear-gradient(90deg,rgb(254,254,254) 0.00px 4.70px,rgb(253,252,252) 4.70px 12.90px,rgb(252,252,252) 12.90px 20.80px,rgb(252,252,252) 20.80px 29.00px,rgb(252,252,252) 29.00px 36.80px,rgb(252,253,252) 36.80px 44.80px,rgb(252,252,252) 44.80px 52.80px,rgb(251,252,252) 52.80px 58.50px)"></div><div class="a" style="left:0;top:190.32px;width:100%;height:8.23px;background:linear-gradient(90deg,rgb(253,252,250) 0.00px 4.70px,rgb(242,243,246) 4.70px 12.90px,rgb(243,243,243) 12.90px 20.80px,rgb(244,244,245) 20.80px 29.00px,rgb(240,240,241) 29.00px 36.80px,rgb(240,240,241) 36.80px 44.80px,rgb(240,241,244) 44.80px 52.80px,rgb(240,240,240) 52.80px 58.50px)"></div><div class="a" style="left:0;top:198.25px;width:100%;height:8.23px;background:linear-gradient(90deg,rgb(252,249,247) 0.00px 4.70px,rgb(227,227,228) 4.70px 12.90px,rgb(223,224,227) 12.90px 20.80px,rgb(231,232,235) 20.80px 29.00px,rgb(234,235,238) 29.00px 36.80px,rgb(231,230,228) 36.80px 44.80px,rgb(231,232,235) 44.80px 52.80px,rgb(230,230,231) 52.80px 58.50px)"></div><div class="a" style="left:0;top:206.18px;width:100%;height:8.23px;background:linear-gradient(90deg,rgb(254,254,254) 0.00px 4.70px,rgb(253,252,252) 4.70px 12.90px,rgb(252,252,252) 12.90px 20.80px,rgb(251,252,252) 20.80px 29.00px,rgb(253,252,252) 29.00px 36.80px,rgb(253,252,252) 36.80px 44.80px,rgb(252,253,252) 44.80px 52.80px,rgb(252,252,252) 52.80px 58.50px)"></div><div class="a" style="left:0;top:214.11px;width:100%;height:8.23px;background:linear-gradient(90deg,rgb(254,254,254) 0.00px 4.70px,rgb(251,252,252) 4.70px 12.90px,rgb(252,253,252) 12.90px 20.80px,rgb(252,253,252) 20.80px 29.00px,rgb(252,252,252) 29.00px 36.80px,rgb(251,252,252) 36.80px 44.80px,rgb(252,252,252) 44.80px 52.80px,rgb(252,252,252) 52.80px 58.50px)"></div><div class="a" style="left:0;top:222.04px;width:100%;height:8.23px;background:linear-gradient(90deg,rgb(253,252,251) 0.00px 4.70px,rgb(240,241,244) 4.70px 12.90px,rgb(245,244,242) 12.90px 20.80px,rgb(240,239,237) 20.80px 29.00px,rgb(240,241,244) 29.00px 36.80px,rgb(243,244,247) 36.80px 44.80px,rgb(238,239,242) 44.80px 52.80px,rgb(238,239,242) 52.80px 58.50px)"></div><div class="a" style="left:0;top:229.97px;width:100%;height:8.23px;background:linear-gradient(90deg,rgb(252,249,246) 0.00px 4.70px,rgb(230,231,234) 4.70px 12.90px,rgb(222,223,226) 12.90px 20.80px,rgb(226,227,230) 20.80px 29.00px,rgb(234,234,235) 29.00px 36.80px,rgb(236,236,236) 36.80px 44.80px,rgb(226,225,223) 44.80px 52.80px,rgb(235,235,235) 52.80px 58.50px)"></div><div class="a" style="left:0;top:237.90px;width:100%;height:8.23px;background:linear-gradient(90deg,rgb(254,254,254) 0.00px 4.70px,rgb(251,252,252) 4.70px 12.90px,rgb(252,253,252) 12.90px 20.80px,rgb(252,252,252) 20.80px 29.00px,rgb(252,252,252) 29.00px 36.80px,rgb(252,252,252) 36.80px 44.80px,rgb(251,252,252) 44.80px 52.80px,rgb(251,252,252) 52.80px 58.50px)"></div><div class="a" style="left:0;top:245.83px;width:100%;height:8.23px;background:linear-gradient(90deg,rgb(254,254,254) 0.00px 4.70px,rgb(252,252,252) 4.70px 12.90px,rgb(251,252,252) 12.90px 20.80px,rgb(252,253,252) 20.80px 29.00px,rgb(252,252,252) 29.00px 36.80px,rgb(252,253,252) 36.80px 44.80px,rgb(253,252,252) 44.80px 52.80px,rgb(252,252,252) 52.80px 58.50px)"></div><div class="a" style="left:0;top:253.76px;width:100%;height:8.23px;background:linear-gradient(90deg,rgb(254,252,251) 0.00px 4.70px,rgb(241,242,245) 4.70px 12.90px,rgb(246,245,243) 12.90px 20.80px,rgb(243,244,247) 20.80px 29.00px,rgb(241,241,241) 29.00px 36.80px,rgb(246,246,246) 36.80px 44.80px,rgb(243,242,240) 44.80px 52.80px,rgb(242,243,246) 52.80px 58.50px)"></div><div class="a" style="left:0;top:261.69px;width:100%;height:8.23px;background:linear-gradient(90deg,rgb(252,249,246) 0.00px 4.70px,rgb(227,226,224) 4.70px 12.90px,rgb(221,220,218) 12.90px 20.80px,rgb(231,231,232) 20.80px 29.00px,rgb(220,221,224) 29.00px 36.80px,rgb(220,221,224) 36.80px 44.80px,rgb(235,234,232) 44.80px 52.80px,rgb(220,219,217) 52.80px 58.50px)"></div><div class="a" style="left:0;top:269.62px;width:100%;height:8.23px;background:linear-gradient(90deg,rgb(254,254,254) 0.00px 4.70px,rgb(251,252,252) 4.70px 12.90px,rgb(253,252,252) 12.90px 20.80px,rgb(252,252,252) 20.80px 29.00px,rgb(253,252,252) 29.00px 36.80px,rgb(252,252,252) 36.80px 44.80px,rgb(253,252,252) 44.80px 52.80px,rgb(253,252,252) 52.80px 58.50px)"></div><div class="a" style="left:0;top:277.55px;width:100%;height:8.23px;background:linear-gradient(90deg,rgb(254,254,254) 0.00px 4.70px,rgb(252,252,252) 4.70px 12.90px,rgb(252,252,252) 12.90px 20.80px,rgb(251,252,252) 20.80px 29.00px,rgb(252,253,252) 29.00px 36.80px,rgb(252,252,252) 36.80px 44.80px,rgb(252,252,252) 44.80px 52.80px,rgb(253,252,252) 52.80px 58.50px)"></div><div class="a" style="left:0;top:285.48px;width:100%;height:8.23px;background:linear-gradient(90deg,rgb(254,253,252) 0.00px 4.70px,rgb(247,248,251) 4.70px 12.90px,rgb(245,245,246) 12.90px 20.80px,rgb(249,248,246) 20.80px 29.00px,rgb(248,247,245) 29.00px 36.80px,rgb(246,246,246) 36.80px 44.80px,rgb(246,246,246) 44.80px 52.80px,rgb(246,246,247) 52.80px 58.50px)"></div><div class="a" style="left:0;top:293.41px;width:100%;height:8.23px;background:linear-gradient(90deg,rgb(252,248,245) 0.00px 4.70px,rgb(223,223,224) 4.70px 12.90px,rgb(226,227,230) 12.90px 20.80px,rgb(226,227,230) 20.80px 29.00px,rgb(217,217,217) 29.00px 36.80px,rgb(222,222,223) 36.80px 44.80px,rgb(226,227,230) 44.80px 52.80px,rgb(226,226,226) 52.80px 58.50px)"></div></div>
<div class="mz" style="left:428.2px;top:203.8px;width:44.40px;height:301.34px"><div class="a" style="left:0;top:0.00px;width:100%;height:8.23px;background:linear-gradient(90deg,rgb(225,224,222) 0.00px 7.80px,rgb(224,224,225) 7.80px 16.00px,rgb(240,239,237) 16.00px 23.90px,rgb(232,232,232) 23.90px 31.80px,rgb(232,233,236) 31.80px 39.90px,rgb(235,235,236) 39.90px 44.40px)"></div><div class="a" style="left:0;top:7.93px;width:100%;height:8.23px;background:linear-gradient(90deg,rgb(244,245,248) 0.00px 7.80px,rgb(238,238,239) 7.80px 16.00px,rgb(245,246,249) 16.00px 23.90px,rgb(242,242,242) 23.90px 31.80px,rgb(240,241,244) 31.80px 39.90px,rgb(243,243,244) 39.90px 44.40px)"></div><div class="a" style="left:0;top:15.86px;width:100%;height:8.23px;background:linear-gradient(90deg,rgb(250,251,251) 0.00px 7.80px,rgb(249,251,251) 7.80px 16.00px,rgb(251,251,251) 16.00px 23.90px,rgb(251,251,251) 23.90px 31.80px,rgb(251,251,251) 31.80px 39.90px,rgb(251,251,251) 39.90px 44.40px)"></div><div class="a" style="left:0;top:23.79px;width:100%;height:8.23px;background:linear-gradient(90deg,rgb(242,245,247) 0.00px 7.80px,rgb(242,245,247) 7.80px 16.00px,rgb(242,245,247) 16.00px 23.90px,rgb(241,244,247) 23.90px 31.80px,rgb(241,244,247) 31.80px 39.90px,rgb(242,244,247) 39.90px 44.40px)"></div><div class="a" style="left:0;top:31.72px;width:100%;height:8.23px;background:linear-gradient(90deg,rgb(227,229,233) 0.00px 7.80px,rgb(229,232,238) 7.80px 16.00px,rgb(230,231,232) 16.00px 23.90px,rgb(217,218,219) 23.90px 31.80px,rgb(219,220,221) 31.80px 39.90px,rgb(229,230,231) 39.90px 44.40px)"></div><div class="a" style="left:0;top:39.65px;width:100%;height:8.23px;background:linear-gradient(90deg,rgb(229,232,238) 0.00px 7.80px,rgb(230,231,232) 7.80px 16.00px,rgb(233,235,238) 16.00px 23.90px,rgb(227,230,236) 23.90px 31.80px,rgb(232,234,237) 31.80px 39.90px,rgb(233,235,238) 39.90px 44.40px)"></div><div class="a" style="left:0;top:47.58px;width:100%;height:8.23px;background:linear-gradient(90deg,rgb(243,246,248) 0.00px 7.80px,rgb(243,245,248) 7.80px 16.00px,rgb(243,246,248) 16.00px 23.90px,rgb(242,245,248) 23.90px 31.80px,rgb(243,245,248) 31.80px 39.90px,rgb(243,245,248) 39.90px 44.40px)"></div><div class="a" style="left:0;top:55.51px;width:100%;height:8.23px;background:linear-gradient(90deg,rgb(252,253,252) 0.00px 7.80px,rgb(253,252,252) 7.80px 16.00px,rgb(252,253,252) 16.00px 23.90px,rgb(252,252,252) 23.90px 31.80px,rgb(252,253,252) 31.80px 39.90px,rgb(252,253,252) 39.90px 44.40px)"></div><div class="a" style="left:0;top:63.44px;width:100%;height:8.23px;background:linear-gradient(90deg,rgb(227,228,231) 0.00px 7.80px,rgb(240,240,240) 7.80px 16.00px,rgb(233,234,237) 16.00px 23.90px,rgb(232,232,232) 23.90px 31.80px,rgb(231,230,228) 31.80px 39.90px,rgb(239,240,243) 39.90px 44.40px)"></div><div class="a" style="left:0;top:71.37px;width:100%;height:8.23px;background:linear-gradient(90deg,rgb(234,235,238) 0.00px 7.80px,rgb(235,236,239) 7.80px 16.00px,rgb(234,234,234) 16.00px 23.90px,rgb(236,237,240) 23.90px 31.80px,rgb(242,243,246) 31.80px 39.90px,rgb(237,238,241) 39.90px 44.40px)"></div><div class="a" style="left:0;top:79.30px;width:100%;height:8.23px;background:linear-gradient(90deg,rgb(252,252,252) 0.00px 7.80px,rgb(252,252,252) 7.80px 16.00px,rgb(252,252,252) 16.00px 23.90px,rgb(251,252,252) 23.90px 31.80px,rgb(252,252,252) 31.80px 39.90px,rgb(252,253,252) 39.90px 44.40px)"></div><div class="a" style="left:0;top:87.23px;width:100%;height:8.23px;background:linear-gradient(90deg,rgb(252,252,252) 0.00px 7.80px,rgb(252,252,252) 7.80px 16.00px,rgb(252,252,252) 16.00px 23.90px,rgb(252,253,252) 23.90px 31.80px,rgb(253,252,252) 31.80px 39.90px,rgb(252,253,252) 39.90px 44.40px)"></div><div class="a" style="left:0;top:95.16px;width:100%;height:8.23px;background:linear-gradient(90deg,rgb(241,242,245) 0.00px 7.80px,rgb(233,234,237) 7.80px 16.00px,rgb(240,240,241) 16.00px 23.90px,rgb(240,241,244) 23.90px 31.80px,rgb(233,233,234) 31.80px 39.90px,rgb(238,237,235) 39.90px 44.40px)"></div><div class="a" style="left:0;top:103.09px;width:100%;height:8.23px;background:linear-gradient(90deg,rgb(236,236,236) 0.00px 7.80px,rgb(232,233,236) 7.80px 16.00px,rgb(237,236,234) 16.00px 23.90px,rgb(239,239,240) 23.90px 31.80px,rgb(240,240,241) 31.80px 39.90px,rgb(232,233,236) 39.90px 44.40px)"></div><div class="a" style="left:0;top:111.02px;width:100%;height:8.23px;background:linear-gradient(90deg,rgb(252,252,252) 0.00px 7.80px,rgb(252,252,252) 7.80px 16.00px,rgb(253,252,252) 16.00px 23.90px,rgb(253,252,252) 23.90px 31.80px,rgb(253,252,252) 31.80px 39.90px,rgb(252,252,252) 39.90px 44.40px)"></div><div class="a" style="left:0;top:118.95px;width:100%;height:8.23px;background:linear-gradient(90deg,rgb(252,253,252) 0.00px 7.80px,rgb(253,252,252) 7.80px 16.00px,rgb(252,252,252) 16.00px 23.90px,rgb(253,252,252) 23.90px 31.80px,rgb(251,252,252) 31.80px 39.90px,rgb(252,252,252) 39.90px 44.40px)"></div><div class="a" style="left:0;top:126.88px;width:100%;height:8.23px;background:linear-gradient(90deg,rgb(236,236,237) 0.00px 7.80px,rgb(240,241,244) 7.80px 16.00px,rgb(243,243,244) 16.00px 23.90px,rgb(240,240,241) 23.90px 31.80px,rgb(240,240,240) 31.80px 39.90px,rgb(236,236,237) 39.90px 44.40px)"></div><div class="a" style="left:0;top:134.81px;width:100%;height:8.23px;background:linear-gradient(90deg,rgb(236,236,237) 0.00px 7.80px,rgb(239,238,236) 7.80px 16.00px,rgb(234,234,234) 16.00px 23.90px,rgb(230,230,231) 23.90px 31.80px,rgb(239,239,239) 31.80px 39.90px,rgb(237,236,234) 39.90px 44.40px)"></div><div class="a" style="left:0;top:142.74px;width:100%;height:8.23px;background:linear-gradient(90deg,rgb(252,252,252) 0.00px 7.80px,rgb(252,252,252) 7.80px 16.00px,rgb(252,252,252) 16.00px 23.90px,rgb(251,252,252) 23.90px 31.80px,rgb(251,252,252) 31.80px 39.90px,rgb(251,252,252) 39.90px 44.40px)"></div><div class="a" style="left:0;top:150.67px;width:100%;height:8.23px;background:linear-gradient(90deg,rgb(253,252,252) 0.00px 7.80px,rgb(253,252,252) 7.80px 16.00px,rgb(252,252,252) 16.00px 23.90px,rgb(252,252,252) 23.90px 31.80px,rgb(252,252,252) 31.80px 39.90px,rgb(251,252,252) 39.90px 44.40px)"></div><div class="a" style="left:0;top:158.60px;width:100%;height:8.23px;background:linear-gradient(90deg,rgb(240,241,244) 0.00px 7.80px,rgb(235,236,239) 7.80px 16.00px,rgb(236,235,233) 16.00px 23.90px,rgb(236,237,240) 23.90px 31.80px,rgb(239,240,243) 31.80px 39.90px,rgb(238,238,238) 39.90px 44.40px)"></div><div class="a" style="left:0;top:166.53px;width:100%;height:8.23px;background:linear-gradient(90deg,rgb(231,231,231) 0.00px 7.80px,rgb(227,226,224) 7.80px 16.00px,rgb(232,233,236) 16.00px 23.90px,rgb(236,235,233) 23.90px 31.80px,rgb(228,228,229) 31.80px 39.90px,rgb(234,233,231) 39.90px 44.40px)"></div><div class="a" style="left:0;top:174.46px;width:100%;height:8.23px;background:linear-gradient(90deg,rgb(252,252,252) 0.00px 7.80px,rgb(253,252,252) 7.80px 16.00px,rgb(252,252,252) 16.00px 23.90px,rgb(252,253,252) 23.90px 31.80px,rgb(251,252,252) 31.80px 39.90px,rgb(252,253,252) 39.90px 44.40px)"></div><div class="a" style="left:0;top:182.39px;width:100%;height:8.23px;background:linear-gradient(90deg,rgb(253,252,252) 0.00px 7.80px,rgb(253,252,252) 7.80px 16.00px,rgb(251,252,252) 16.00px 23.90px,rgb(253,252,252) 23.90px 31.80px,rgb(252,252,252) 31.80px 39.90px,rgb(252,252,252) 39.90px 44.40px)"></div><div class="a" style="left:0;top:190.32px;width:100%;height:8.23px;background:linear-gradient(90deg,rgb(240,240,240) 0.00px 7.80px,rgb(244,245,248) 7.80px 16.00px,rgb(237,238,241) 16.00px 23.90px,rgb(237,238,241) 23.90px 31.80px,rgb(238,239,242) 31.80px 39.90px,rgb(241,240,238) 39.90px 44.40px)"></div><div class="a" style="left:0;top:198.25px;width:100%;height:8.23px;background:linear-gradient(90deg,rgb(238,238,239) 0.00px 7.80px,rgb(233,232,230) 7.80px 16.00px,rgb(224,223,221) 16.00px 23.90px,rgb(226,227,230) 23.90px 31.80px,rgb(229,229,230) 31.80px 39.90px,rgb(227,227,227) 39.90px 44.40px)"></div><div class="a" style="left:0;top:206.18px;width:100%;height:8.23px;background:linear-gradient(90deg,rgb(252,252,252) 0.00px 7.80px,rgb(252,253,252) 7.80px 16.00px,rgb(251,252,252) 16.00px 23.90px,rgb(253,252,252) 23.90px 31.80px,rgb(252,252,252) 31.80px 39.90px,rgb(252,252,252) 39.90px 44.40px)"></div><div class="a" style="left:0;top:214.11px;width:100%;height:8.23px;background:linear-gradient(90deg,rgb(251,252,252) 0.00px 7.80px,rgb(253,252,252) 7.80px 16.00px,rgb(253,252,252) 16.00px 23.90px,rgb(252,252,252) 23.90px 31.80px,rgb(252,252,252) 31.80px 39.90px,rgb(252,252,252) 39.90px 44.40px)"></div><div class="a" style="left:0;top:222.04px;width:100%;height:8.23px;background:linear-gradient(90deg,rgb(245,245,245) 0.00px 7.80px,rgb(241,241,241) 7.80px 16.00px,rgb(244,245,248) 16.00px 23.90px,rgb(242,242,243) 23.90px 31.80px,rgb(242,241,239) 31.80px 39.90px,rgb(239,239,240) 39.90px 44.40px)"></div><div class="a" style="left:0;top:229.97px;width:100%;height:8.23px;background:linear-gradient(90deg,rgb(221,221,221) 0.00px 7.80px,rgb(237,237,238) 7.80px 16.00px,rgb(221,221,222) 16.00px 23.90px,rgb(225,225,226) 23.90px 31.80px,rgb(230,229,227) 31.80px 39.90px,rgb(229,230,233) 39.90px 44.40px)"></div><div class="a" style="left:0;top:237.90px;width:100%;height:8.23px;background:linear-gradient(90deg,rgb(252,252,252) 0.00px 7.80px,rgb(251,252,252) 7.80px 16.00px,rgb(252,252,252) 16.00px 23.90px,rgb(251,252,252) 23.90px 31.80px,rgb(251,252,252) 31.80px 39.90px,rgb(251,252,252) 39.90px 44.40px)"></div><div class="a" style="left:0;top:245.83px;width:100%;height:8.23px;background:linear-gradient(90deg,rgb(252,252,252) 0.00px 7.80px,rgb(252,253,252) 7.80px 16.00px,rgb(252,252,252) 16.00px 23.90px,rgb(252,253,252) 23.90px 31.80px,rgb(252,252,252) 31.80px 39.90px,rgb(252,252,252) 39.90px 44.40px)"></div><div class="a" style="left:0;top:253.76px;width:100%;height:8.23px;background:linear-gradient(90deg,rgb(245,245,245) 0.00px 7.80px,rgb(242,242,242) 7.80px 16.00px,rgb(242,243,246) 16.00px 23.90px,rgb(247,248,251) 23.90px 31.80px,rgb(248,247,245) 31.80px 39.90px,rgb(246,246,246) 39.90px 44.40px)"></div><div class="a" style="left:0;top:261.69px;width:100%;height:8.23px;background:linear-gradient(90deg,rgb(235,236,239) 0.00px 7.80px,rgb(233,233,234) 7.80px 16.00px,rgb(233,234,237) 16.00px 23.90px,rgb(222,222,223) 23.90px 31.80px,rgb(225,226,229) 31.80px 39.90px,rgb(222,223,226) 39.90px 44.40px)"></div><div class="a" style="left:0;top:269.62px;width:100%;height:8.23px;background:linear-gradient(90deg,rgb(252,252,252) 0.00px 7.80px,rgb(252,252,252) 7.80px 16.00px,rgb(251,252,252) 16.00px 23.90px,rgb(253,252,252) 23.90px 31.80px,rgb(252,252,252) 31.80px 39.90px,rgb(251,252,252) 39.90px 44.40px)"></div><div class="a" style="left:0;top:277.55px;width:100%;height:8.23px;background:linear-gradient(90deg,rgb(252,253,252) 0.00px 7.80px,rgb(251,252,252) 7.80px 16.00px,rgb(252,253,252) 16.00px 23.90px,rgb(252,252,252) 23.90px 31.80px,rgb(251,252,252) 31.80px 39.90px,rgb(252,253,252) 39.90px 44.40px)"></div><div class="a" style="left:0;top:285.48px;width:100%;height:8.23px;background:linear-gradient(90deg,rgb(245,246,249) 0.00px 7.80px,rgb(245,246,249) 7.80px 16.00px,rgb(247,247,247) 16.00px 23.90px,rgb(246,246,247) 23.90px 31.80px,rgb(244,245,248) 31.80px 39.90px,rgb(249,248,246) 39.90px 44.40px)"></div><div class="a" style="left:0;top:293.41px;width:100%;height:8.23px;background:linear-gradient(90deg,rgb(223,223,224) 0.00px 7.80px,rgb(227,227,228) 7.80px 16.00px,rgb(234,233,231) 16.00px 23.90px,rgb(228,229,232) 23.90px 31.80px,rgb(228,227,225) 31.80px 39.90px,rgb(230,231,234) 39.90px 44.40px)"></div></div>
<div class="a" style="left:158px;top:516px;width:872px;height:5px;border-radius:2.5px;background:#a6a6a6"></div>
<div class="a" style="left:158px;top:521px;width:1092px;height:1px;background:#ebeef5"></div>
<div class="a" style="left:1125px;top:163.3px;width:6.2px;height:351.4px;background:linear-gradient(90deg,rgba(0,0,0,0),rgba(40,60,100,0.09))"></div>
<div class="c th" style="left:1131.2px;width:118.8px;border-right:none">操作</div>
<div class="c td" style="left:1131.2px;top:194.00px;width:118.8px;height:32.15px;line-height:33.85px;background:#fff;border-right:none;color:#409eff;font-size:9.33px">研判</div>
<div class="c td" style="left:1131.2px;top:226.15px;width:118.8px;height:32.15px;line-height:33.85px;background:#f5f7fa;border-right:none;color:#409eff;font-size:9.33px">研判</div>
<div class="c td" style="left:1131.2px;top:258.30px;width:118.8px;height:32.15px;line-height:33.85px;background:#fff;border-right:none;color:#409eff;font-size:9.33px">研判</div>
<div class="c td" style="left:1131.2px;top:290.45px;width:118.8px;height:32.15px;line-height:33.85px;background:#fff;border-right:none;color:#409eff;font-size:9.33px">研判</div>
<div class="c td" style="left:1131.2px;top:322.60px;width:118.8px;height:32.15px;line-height:33.85px;background:#fff;border-right:none;color:#409eff;font-size:9.33px">研判</div>
<div class="c td" style="left:1131.2px;top:354.75px;width:118.8px;height:32.15px;line-height:33.85px;background:#fff;border-right:none;color:#409eff;font-size:9.33px">研判</div>
<div class="c td" style="left:1131.2px;top:386.90px;width:118.8px;height:32.15px;line-height:33.85px;background:#fff;border-right:none;color:#409eff;font-size:9.33px">研判</div>
<div class="c td" style="left:1131.2px;top:419.05px;width:118.8px;height:32.15px;line-height:33.85px;background:#fff;border-right:none;color:#409eff;font-size:9.33px">研判</div>
<div class="c td" style="left:1131.2px;top:451.20px;width:118.8px;height:32.15px;line-height:33.85px;background:#fff;border-right:none;color:#409eff;font-size:9.33px">研判</div>
<div class="c td" style="left:1131.2px;top:483.35px;width:118.8px;height:32.15px;line-height:33.85px;background:#fff;border-right:none;color:#409eff;font-size:9.33px">研判</div>
<div class="a" style="left:1131.2px;top:515.5px;width:118.8px;height:5.5px;background:#fff"></div>
<div class="a" style="left:785.8px;top:536.2px;font-size:9px;line-height:12px">共 94 条</div>
<div class="a inp" style="left:830.4px;top:531.8px;width:84.4px;height:20.8px"></div>
<div class="c" style="left:840px;top:536.4px;width:50px;font-size:9px;line-height:12px">10条/页</div>
<svg class="a" style="left:899.80px;top:540.55px" width="6" height="4.30" viewBox="0 0 6 4.30"><path d="M0.6 0.8 L3.00 3.30 L5.40 0.8" fill="none" stroke="#b4b8bf" stroke-width="0.8" stroke-linecap="round" stroke-linejoin="round"/></svg>
<div class="a pg" style="left:925.3px;width:21.3px"></div>
<div class="a pg" style="left:952.3px;width:20.1px;background:#409eff;border-color:#409eff;color:#fff;font-weight:bold;border-radius:2px">1</div>
<div class="a pg" style="left:978.4px;width:20.6px">2</div>
<div class="a pg" style="left:1004.6px;width:20.6px">3</div>
<div class="a pg" style="left:1031.4px;width:20.4px">4</div>
<div class="a pg" style="left:1057.5px;width:20.7px">5</div>
<div class="a pg" style="left:1084.0px;width:20.5px">6</div>
<div class="a pg" style="left:1110.4px;width:20.8px;font-size:5.6px;letter-spacing:0.5px;color:#303133;padding-left:0.5px">•••</div>
<div class="a pg" style="left:1137.0px;width:20.5px"></div>
<svg class="a" style="left:933.4px;top:539px" width="5" height="7" viewBox="0 0 5 7"><path d="M3.8 0.7 L1 3.5 L3.8 6.3" fill="none" stroke="#b4b8bf" stroke-width="0.8"/></svg>
<svg class="a" style="left:1145px;top:539px" width="5" height="7" viewBox="0 0 5 7"><path d="M1.2 0.7 L4 3.5 L1.2 6.3" fill="none" stroke="#303133" stroke-width="0.9"/></svg>
<div class="a" style="left:1171.2px;top:536.2px;font-size:9.33px;line-height:12px">前往</div>
<div class="a inp" style="left:1195.3px;top:531.8px;width:36.5px;height:20.8px;text-align:center;font-size:9px;line-height:19.8px">1</div>
<div class="a" style="left:1237.5px;top:536.2px;font-size:9.33px;line-height:12px">页</div>
<div class="a" style="left:1259px;top:0;width:10px;height:625px;background:linear-gradient(90deg,rgba(0,0,0,0),rgba(0,0,0,.012) 40%,rgba(0,0,0,.04))"></div>
</body></html>
